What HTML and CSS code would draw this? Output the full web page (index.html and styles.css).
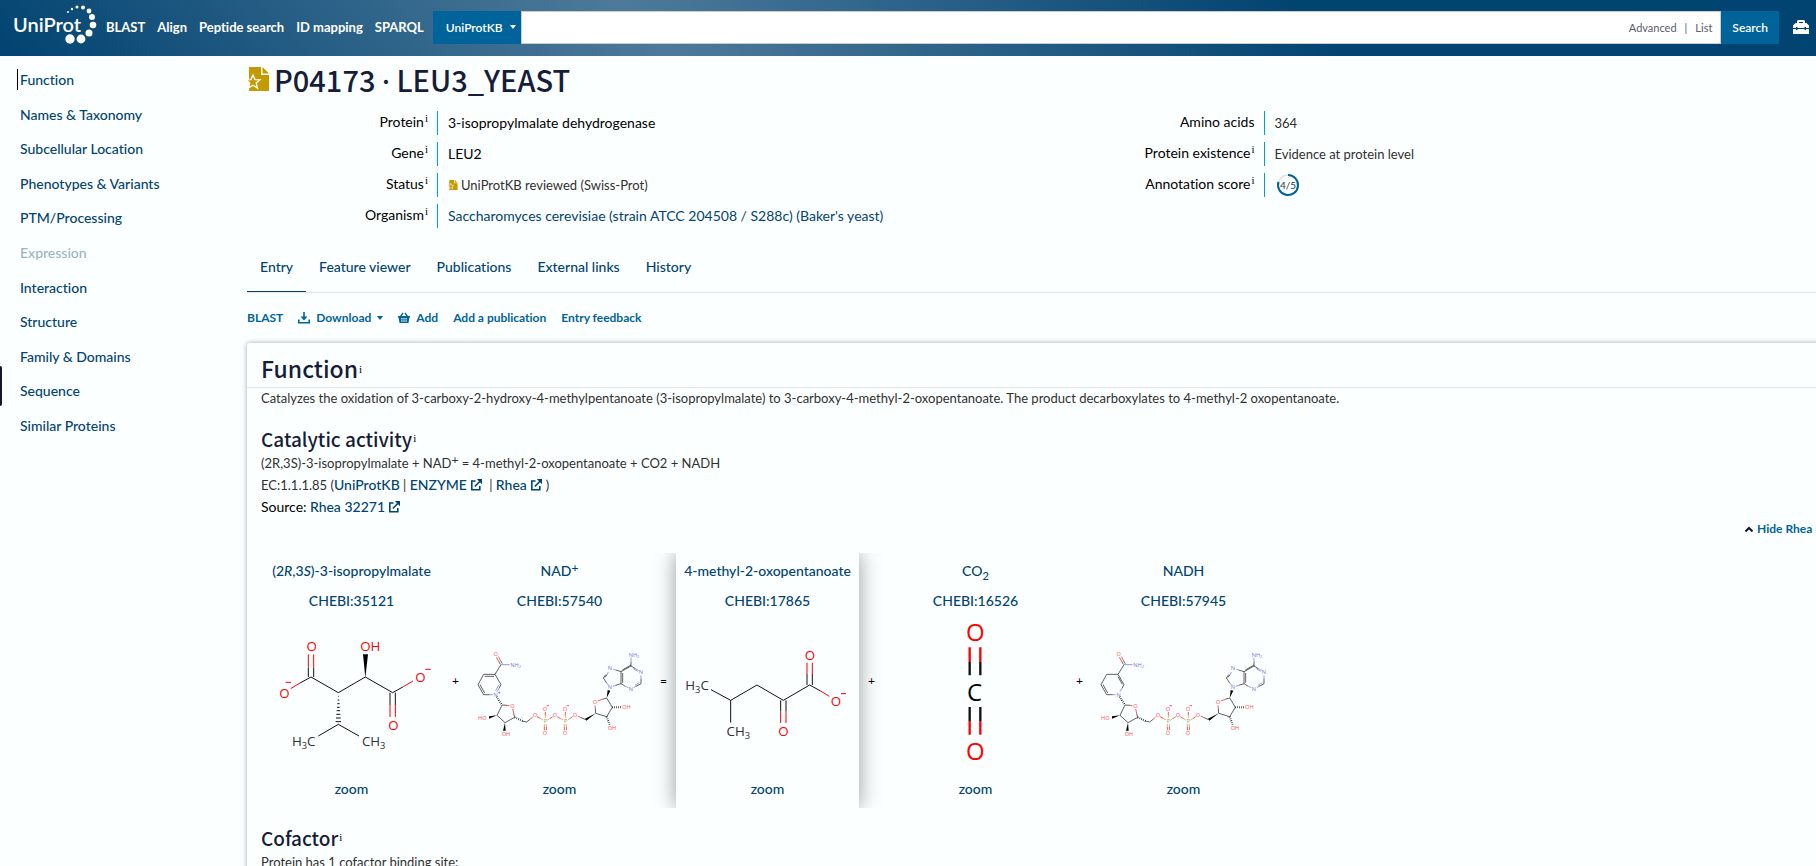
FILE: index.html
```html
<!DOCTYPE html>
<html lang="en">
<head>
<meta charset="utf-8">
<title>LEU2 - 3-isopropylmalate dehydrogenase | UniProtKB</title>
<link rel="stylesheet" href="styles.css">
</head>
<body>
<svg class="defs" aria-hidden="true">
  <symbol id="reviewed" viewBox="0 0 22 24">
    <path fill="#c39b00" d="M2 0h12v8h8v16H2z"/>
    <path fill="#c39b00" d="M15.500 0v6.500H22z"/>
    <path fill="#c39b00" stroke="#fcffff" stroke-width="1.300" d="M6 8l2 4.600 5 .3-3.800 3.200 1.300 4.900L6 18.300 1.500 21l1.200-4.900-3.800-3.200 5-.3z"/>
  </symbol>
  <symbol id="external" viewBox="0 0 12 12">
    <path fill="none" stroke="currentColor" stroke-width="1.600" d="M5.500 2H1.800v8.800h8V7M4.800 7.500L10 2.300"/>
    <path fill="currentColor" d="M6.800 0H12v5.200z"/>
  </symbol>
</svg>

<header class="header">
  <a class="logo" href="#" aria-label="UniProt home">
    <svg width="84" height="44" viewBox="0 0 84 44">
      <text x="0" y="27" class="logo-text">UniProt</text>
      <g fill="#fff">
        <circle cx="55" cy="7" r="1"/><circle cx="59" cy="4" r="1.200"/><circle cx="64" cy="2" r="1.500"/><circle cx="70" cy="2.500" r="2"/>
        <circle cx="76" cy="6" r="2.400"/><circle cx="79" cy="12" r="3"/><circle cx="80" cy="20" r="3.300"/><circle cx="76" cy="28" r="3.500"/>
        <circle cx="57" cy="34" r="4.700"/><circle cx="68" cy="34" r="4.400"/>
      </g>
    </svg>
  </a>
  <nav class="topnav">
    <a href="#">BLAST</a><a href="#">Align</a><a href="#">Peptide search</a><a href="#">ID mapping</a><a href="#">SPARQL</a>
  </nav>
  <form class="search">
    <button type="button" class="ns">UniProtKB<span class="caret"></span></button>
    <div class="field">
      <input type="text" aria-label="Search UniProtKB">
      <a href="#">Advanced</a><span>|</span><a href="#">List</a>
    </div>
    <button type="submit" class="go">Search</button>
  </form>
  <button type="button" class="tool" aria-label="Tools">
    <svg width="16" height="14" viewBox="0 0 16 14"><path fill="#fff" fill-rule="evenodd" d="M4 3V1.500Q4 0 5.500 0h5Q12 0 12 1.500V3h1.500L16 5.500V8h-3V7h-1.500v1h-7V7H3v1H0V5.500L2.500 3zM6 3h4V2H6zM0 9h3v1h1.500V9h7v1H13V9h3v5H0z"/></svg>
  </button>
</header>

<div class="page">
  <aside class="sidebar">
    <ul>
      <li><a class="current" href="#">Function</a></li>
      <li><a href="#">Names &amp; Taxonomy</a></li>
      <li><a href="#">Subcellular Location</a></li>
      <li><a href="#">Phenotypes &amp; Variants</a></li>
      <li><a href="#">PTM/Processing</a></li>
      <li><a class="off" href="#">Expression</a></li>
      <li><a href="#">Interaction</a></li>
      <li><a href="#">Structure</a></li>
      <li><a href="#">Family &amp; Domains</a></li>
      <li><a href="#">Sequence</a></li>
      <li><a href="#">Similar Proteins</a></li>
    </ul>
  </aside>

  <main class="main">
    <h1><svg width="22" height="24"><use href="#reviewed"/></svg><span>P04173 <span class="dot">·</span> LEU3_YEAST</span></h1>
    <div class="facts">
      <dl>
        <div><dt>Protein<sup>i</sup></dt><dd class="strong">3-isopropylmalate dehydrogenase</dd></div>
        <div><dt>Gene<sup>i</sup></dt><dd class="strong">LEU2</dd></div>
        <div><dt>Status<sup>i</sup></dt><dd><svg class="mini" width="10" height="10"><use href="#reviewed"/></svg>UniProtKB reviewed (Swiss-Prot)</dd></div>
        <div><dt>Organism<sup>i</sup></dt><dd><a href="#">Saccharomyces cerevisiae (strain ATCC 204508 / S288c) (Baker's yeast)</a></dd></div>
      </dl>
      <dl>
        <div><dt>Amino acids</dt><dd>364</dd></div>
        <div><dt>Protein existence<sup>i</sup></dt><dd>Evidence at protein level</dd></div>
        <div><dt>Annotation score<sup>i</sup></dt><dd>
          <svg class="score" width="24" height="24" viewBox="0 0 24 24">
            <circle cx="12" cy="12" r="10" fill="none" stroke="#dde3e6" stroke-width="1.500"/>
            <path d="M12 2a10 10 0 1 1-9.500 6.900" fill="none" stroke="#00639a" stroke-width="2"/>
            <text x="12" y="16">4/5</text>
          </svg></dd></div>
      </dl>
    </div>

    <nav class="tabs">
      <a class="active" href="#">Entry</a><a href="#">Feature viewer</a><a href="#">Publications</a><a href="#">External links</a><a href="#">History</a>
    </nav>

    <div class="actions">
      <button type="button">BLAST</button>
      <button type="button"><svg width="12" height="12" viewBox="0 0 12 12"><path fill="none" stroke="currentColor" stroke-width="1.600" d="M.8 7.500v3.200h10.400V7.500M6 0v7"/><path fill="currentColor" d="M2.500 4.500h7L6 8.500z"/></svg>Download<span class="caret"></span></button>
      <button type="button"><svg width="12" height="12" viewBox="0 0 12 12"><path fill="currentColor" fill-rule="evenodd" d="M0 4h2L4.500.5l1 .7L3.800 4h4.400L6.500 1.200l1-.7L10 4h2v1.500h-.6L10.500 11h-9L.6 5.500H0zM3.300 6v1.500h1.200V6zM5.400 6v1.500h1.200V6zM7.500 6v1.500h1.200V6zM3.300 8.200v1.500h1.200V8.200zM5.400 8.200v1.500h1.200V8.200zM7.500 8.200v1.500h1.200V8.200z"/></svg>Add</button>
      <button type="button">Add a publication</button>
      <button type="button">Entry feedback</button>
    </div>

    <section class="card">
      <h2>Function<sup>i</sup></h2>
      <div class="body">
        <p>Catalyzes the oxidation of 3-carboxy-2-hydroxy-4-methylpentanoate (3-isopropylmalate) to 3-carboxy-4-methyl-2-oxopentanoate. The product decarboxylates to 4-methyl-2 oxopentanoate.</p>
        <h3>Catalytic activity<sup>i</sup></h3>
        <p>(2R,3S)-3-isopropylmalate + NAD<span class="plus">+</span> = 4-methyl-2-oxopentanoate + CO2 + NADH</p>
        <p>EC:1.1.1.85 (<a href="#">UniProtKB</a> | <a href="#">ENZYME<svg class="ext" width="12" height="12"><use href="#external"/></svg></a> | <a href="#">Rhea<svg class="ext" width="12" height="12"><use href="#external"/></svg></a>)</p>
        <p><strong>Source:</strong> <a href="#">Rhea 32271<svg class="ext" width="12" height="12"><use href="#external"/></svg></a></p>
        <div class="toggle"><button type="button"><svg width="8" height="6" viewBox="0 0 8 6"><path fill="none" stroke="#14142b" stroke-width="2" d="M.5 5.500L4 2l3.500 3.500"/></svg>Hide Rhea reaction</button></div>

        <div class="reaction">
          <div class="molecule">
            <a href="#">(2<i>R</i>,3<i>S</i>)-3-isopropylmalate</a><a href="#">CHEBI:35121</a>
            <svg viewBox="30 219 549 486">
              <path class="bond big" d="M175 411V383M191 411V383M150 429L183 411 265 458 346 411 428 458 460 440M420 458V495M436 458V495M205 588L265 553 327 588"/>
              <path class="bond big ob" d="M175 383V343M191 383V343M150 429L122 446M460 440L489 423M420 495V531M436 495V531M107 427H123M526 388H542"/>
              <path class="solid" d="M346 413L339 343H354z"/>
              <path class="bond big" d="M264 469h2M263 480h5M262 491h7M261 502h8M260 512h10M259 523h12M258 534h14M257 545h16"/>
              <g class="atom red"><text x="185" y="333">O</text><text x="103" y="473">O</text><text x="511" y="427">O</text><text x="430" y="569">O</text><text x="361" y="333">OH</text></g>
              <g class="atom"><text x="161" y="618">H<tspan class="sub" dy="9">3</tspan><tspan dy="-9">C</tspan></text><text x="371" y="618">CH<tspan class="sub" dy="9">3</tspan></text></g>
            </svg>
            <button type="button">zoom</button>
          </div>
          <span>+</span>
          <div class="molecule">
            <a href="#">NAD<span class="plus">+</span></a><a href="#">CHEBI:57540</a>
            <svg viewBox="84 219 549 486">
              <g id="nucleotide">
                <g class="bond">
                  <path d="M183 374L165 403H131L114 434 131 464H149M165 403L183 434 177 445"/>
                  <path d="M186 495L171 526 195 548 224 532M186 495L201 496M224 532L221 520M246 543L260 546 270 538M437 539L421 532M467 520L466 505M500 474L517 502 500 530 467 520M500 474L487 478"/>
                  <path d="M490 414L497 404M490 414L500 429M527 390L543 395V431L527 436M543 395L573 378L586 386M543 431L556 439M573 378V365M603 431L588 439M603 431V416"/>
                  <path d="M548 399V428M495 412L501 404M547 390L573 375M176 364L181 373M181 361L187 371"/>
                </g>
                <path class="bond nb" d="M183 374H209M149 464H158M177 445L171 455M501 404L505 396M500 429L505 435M520 388L527 390M527 436L518 439M586 386L596 391M556 439L565 443M588 439L581 443M603 416V406M573 365V353M580 386L593 394M585 436L598 428"/>
                <path class="bond ob" d="M201 496L208 497M221 520L218 507M169 352L176 364M175 350L181 361M270 538L278 531M421 532L413 528M466 505L465 496M487 478L473 483M291 530L302 536M329 536L338 530M352 530L362 536M389 536L398 530M316 527V516M376 527V516M313 561V571M319 561V571M373 561V571M379 561V571"/>
                <path class="bond pb" d="M302 536L309 540M323 540L329 536M362 536L369 540M383 540L389 536M316 534V527M376 534V527M313 552V561M319 552V561M373 552V561M379 552V561"/>
                <path class="solid" d="M171 526L147 529V536zM195 548L189 572H197zM467 520L435 536 439 542zM500 474L503 450 511 452z"/>
                <path class="hash" d="M170 470L186 495M224 532L248 543M517 502H546M500 530L509 554"/>
                <g class="atom small red">
                  <text x="167" y="349">O</text><text x="217" y="504">O</text><text x="127" y="541">HO</text><text x="198" y="588">OH</text>
                  <text x="285" y="532">O</text><text x="315" y="514">O</text><text x="315" y="586">O</text><text x="345" y="532">O</text>
                  <text x="375" y="514">O</text><text x="375" y="586">O</text><text x="405" y="532">O</text><text x="465" y="493">O</text>
                  <text x="559" y="508">OH</text><text x="516" y="570">OH</text>
                </g>
                <path class="bond ob" d="M320 497h7M380 497h7"/>
                <g class="atom small blue">
                  <text x="227" y="380">NH<tspan class="tiny" dy="4">2</tspan></text><text x="582" y="350">NH<tspan class="tiny" dy="4">2</tspan></text>
                  <text x="167" y="470">N</text><text x="510" y="391">N</text><text x="510" y="447">N</text><text x="603" y="403">N</text><text x="573" y="453">N</text>
                </g>
                <g class="atom small gold"><text x="316" y="549">P</text><text x="376" y="549">P</text></g>
              </g>
              <path class="bond" d="M134 409H162M120 434L134 459"/><path class="bond nb" d="M177 434L167 452M175 458h6M178 455v6"/>
            </svg>
            <button type="button">zoom</button>
          </div>
          <span>=</span>
          <div class="molecule raised">
            <a href="#">4-methyl-2-oxopentanoate</a><a href="#">CHEBI:17865</a>
            <svg viewBox="48 219 549 486">
              <path class="bond big" d="M153 449L212 481V548M212 481L291 435 370 481 449 435 480 452M441 435V402M457 435V402M362 481V515M378 481V515"/>
              <path class="bond big ob" d="M441 402V368M457 402V368M362 515V549M378 515V549M480 452L508 469M543 461H558"/>
              <g class="atom red"><text x="450" y="361">O</text><text x="370" y="589">O</text><text x="528" y="499">O</text></g>
              <g class="atom"><text x="111" y="451">H<tspan class="sub" dy="9">3</tspan><tspan dy="-9">C</tspan></text><text x="235" y="589">CH<tspan class="sub" dy="9">3</tspan></text></g>
            </svg>
            <button type="button">zoom</button>
          </div>
          <span>+</span>
          <div class="molecule">
            <a href="#">CO<sub>2</sub></a><a href="#">CHEBI:16526</a>
            <svg viewBox="72 219 549 486">
              <path class="bond huge" d="M329 366V406M361 366V406M329 501V543M361 501V543"/>
              <path class="bond huge ob" d="M329 322V366M361 322V366M329 543V584M361 543V584"/>
              <g class="atom large red"><text x="346" y="302">O</text><text x="346" y="659">O</text></g>
              <g class="atom large"><text x="344" y="484">C</text></g>
            </svg>
            <button type="button">zoom</button>
          </div>
          <span>+</span>
          <div class="molecule">
            <a href="#">NADH</a><a href="#">CHEBI:57945</a>
            <svg viewBox="87 219 549 486"><use href="#nucleotide"/><path class="bond" d="M120 434L134 459M165 410L178 433"/></svg>
            <button type="button">zoom</button>
          </div>
        </div>

        <h3>Cofactor<sup>i</sup></h3>
        <p>Protein has 1 cofactor binding site:</p>
      </div>
    </section>
  </main>
</div>
<div class="feedback-tab"></div>
</body>
</html>
```
FILE: styles.css
```css
* { box-sizing: border-box; }
html, body { height: 100%; }
body {
  margin: 0;
  display: flex;
  flex-direction: column;
  overflow: hidden;
  background: #fcffff;
  color: #303030;
  font: 14px/21px Lato, "Liberation Sans", sans-serif;
  font-variant-ligatures: none;
}
a { color: #014371; text-decoration: none; font-weight: 500; }
button { font: inherit; border: 0; padding: 0; background: none; cursor: pointer; }
ul, dl, dd, p, h1, h2, h3 { margin: 0; padding: 0; }
sup { font: 11px/10px "Liberation Serif", serif; vertical-align: 5px; margin-left: 1px; color: #000; }
.plus { font-size: 12px; line-height: 10px; vertical-align: 4px; }
.defs { position: absolute; width: 0; height: 0; }
.caret { display: inline-block; border: 3px solid transparent; border-top: 4px solid currentColor; border-bottom: 0; margin-left: 7px; vertical-align: 3px; }

.header {
  flex: none;
  height: 56px;
  display: flex;
  align-items: center;
  padding: 0 7px 2px 13px;
  background: linear-gradient(45deg, #014371, #4d7a9a 36%, #014371 72%);
}
.logo { width: 93px; height: 44px; }
.logo-text { font: 600 20px Lato, sans-serif; fill: #fff; }
.topnav { display: flex; gap: 12px; margin-right: 9px; }
.topnav a { color: #fff; font-size: 13px; font-weight: 700; }
.search { flex: 1; display: flex; height: 33px; font-size: 12px; }
.ns, .go { background: #00639a; color: #fff; font-weight: 600; padding: 0 11px; }
.ns { padding: 0 5px 0 13px; }
.field { flex: 1; display: flex; align-items: center; gap: 8px; padding-right: 8px; background: #fff; border: 1px solid #c8ccd0; color: #5b5b70; font-size: 11px; }
.field input { flex: 1; border: 0; outline: 0; background: none; height: 100%; }
.field a { color: #5b5b70; font-weight: 400; }
.tool { margin-left: 14px; width: 16px; height: 14px; display: flex; }

.page { flex: 1; min-height: 0; display: flex; }
.sidebar { flex: none; width: 247px; padding: 13px 0 0 17px; }
.sidebar ul { list-style: none; display: flex; flex-direction: column; justify-content: space-between; height: 367px; }
.sidebar a { display: block; padding-left: 3px; }
.sidebar .current { border-left: 1px solid #000; padding-left: 2px; }
.sidebar .off { opacity: .4; }

.main { flex: 1; min-width: 0; margin-right: -84px; }
h1, h2, h3 { font-family: "Noto Sans CJK SC", sans-serif; font-weight: 500; color: #161d39; }
h1 { display: flex; align-items: center; gap: 5px; font-size: 29px; line-height: 46px; }
.dot { font-family: "Noto Sans", sans-serif; line-height: 1; }
.facts { display: grid; grid-template-columns: 1fr 1fr; padding-top: 9px; }
.facts dl { display: flex; flex-direction: column; gap: 7px; }
.facts dl div { display: grid; grid-template-columns: 190px 1fr; height: 24px; }
dt { text-align: right; padding-right: 9px; line-height: 21px; color: #000; }
dd { border-left: 1px solid #00a0c8; padding-left: 10px; line-height: 24px; font-size: 13px; }
dd.strong, dd a, p a, strong { font-size: 14px; }
dd a { font-weight: 400; }
.strong { color: #000; }
.mini { margin-right: 3px; }
.score { display: block; margin-left: 1px; }
.score text { font: 10px Lato, sans-serif; text-anchor: middle; fill: #303050; }

.tabs { display: flex; margin-top: 16px; border-bottom: 1px solid #e1e5e7; }
.tabs a { padding: 12px 13px 13px; line-height: 22px; border-bottom: 1px solid transparent; }
.tabs .active { border-bottom-color: #014371; }
.actions { display: flex; gap: 15px; padding: 14px 0 16px; font-size: 12px; }
.actions button, .toggle button { color: #00639a; font-weight: 700; display: flex; align-items: center; gap: 6px; }
.actions .caret { margin: 0; }

.card { box-shadow: 0 0 5px rgba(20, 20, 60, .4); border-radius: 3px; margin-top: -1px; padding-bottom: 16px; }
h2 { font-size: 23px; line-height: 33px; padding: 9px 14px 2px; border-bottom: 1px solid #e1e5e7; }
h3 { font-size: 19px; line-height: 28px; margin-top: 16px; }
h2 sup, h3 sup { margin-left: 1px; vertical-align: 5px; }
.body { padding: 0 14px; }
p { font-size: 13px; }
strong { font-weight: 400; color: #000; }
.ext { margin: 0 4px 0 3px; vertical-align: -1px; }
.toggle { display: flex; justify-content: flex-end; font-size: 12px; padding-right: 27px; }
.toggle button { gap: 4px; }

.reaction { display: flex; overflow: hidden; margin: 14px -14px 0; padding-left: 13px; }
.reaction > span { width: 25px; text-align: center; align-self: center; color: #000; font-size: 12px; }
.molecule { width: 183px; height: 255px; display: flex; flex-direction: column; align-items: center; padding-top: 7px; }
.molecule a { height: 30px; line-height: 22px; }
.molecule sub { font-size: 11px; line-height: 1; }
.molecule svg { flex: none; width: 183px; height: 162px; margin-top: -7px; }
.molecule button { color: #014371; font-weight: 500; line-height: 28px; }
.raised { box-shadow: 0 0 20px rgba(0, 0, 0, .4); }

.bond { fill: none; stroke: #111; stroke-width: 2; }
.big { stroke-width: 3; }
.huge { stroke-width: 7; }
.ob { stroke: #f00; }
.nb { stroke: #6464d2; }
.pb { stroke: #b4963c; }
.solid { fill: #000; }
.hash { fill: none; stroke: #111; stroke-width: 6; stroke-dasharray: 2 4; }
.atom { font: 40px "Open Sans", sans-serif; text-anchor: middle; fill: #303030; }
.atom .sub { font-size: 28px; }
.small { font-size: 17px; }
.small .tiny { font-size: 12px; }
.large { font-size: 72px; fill: #000; }
.red { fill: #f00; }
.small.red { fill: #ff5050; }
.blue { fill: #7878d8; }
.gold { fill: #b4963c; }

.feedback-tab { position: fixed; left: 0; top: 366px; width: 2px; height: 40px; background: #14142b; border-radius: 0 2px 2px 0; }
```
